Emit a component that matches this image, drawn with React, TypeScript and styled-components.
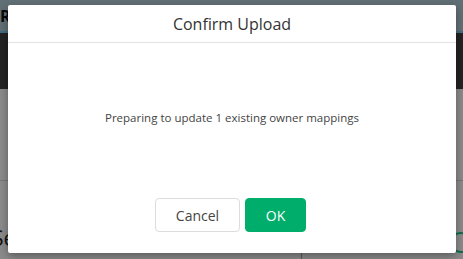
import React from "react"
import { styled, createGlobalStyle } from "styled-components"

const GlobalStyle = createGlobalStyle`
    html, body {
        margin: 0;
        padding: 0;
        width: 100%;
        height: 100%;
        overflow: hidden;
        font-family: "Open Sans", "Liberation Sans", sans-serif;
    }
    #root {
        height: 100%;
    }
`

const StyledPage = styled.div`
    position: relative;
    height: 100vh;
    display: flex;
    flex-direction: column;
    background-color: #ffffff;
`

const StyledTopBar = styled.header`
    height: 31px;
    flex-shrink: 0;
    display: flex;
    align-items: center;
    background-color: #b3cfd8;
    border-bottom: 2px solid #78c8ee;
    font-weight: 700;
    font-size: 16px;
    color: #111;
`

const StyledNav = styled.nav`
    height: 56px;
    flex-shrink: 0;
    background-color: #424242;
`

const StyledContent = styled.main`
    flex: 1;
    display: flex;
    flex-direction: column;
`

const StyledSection = styled.section`
    height: 91px;
    border-bottom: 1px solid #d8d8d8;
`

const StyledRow = styled.div`
    flex: 1;
    display: grid;
    grid-template-columns: 302px 1fr;
`

const StyledCell = styled.div<{ $divider?: boolean }>`
    display: flex;
    align-items: flex-end;
    padding-bottom: ${({ $divider }) => ($divider ? "8px" : "6px")};
    border-right: ${({ $divider }) => ($divider ? "1px solid #a0a0a0" : "none")};
    justify-content: ${({ $divider }) => ($divider ? "flex-start" : "flex-end")};
`

const StyledSectionTitle = styled.span`
    font-size: 21px;
    line-height: 1.2;
    color: #222;
    margin-left: -8px;
`

const StyledStatusRing = styled.span`
    width: 17px;
    height: 17px;
    border-radius: 50%;
    border: 2px solid #15c98d;
    margin-right: -8px;
`

const StyledBackdrop = styled.div`
    position: absolute;
    inset: 0;
    background-color: rgba(0, 0, 0, 0.46);
`

const StyledModal = styled.div`
    position: absolute;
    left: 8px;
    top: 5px;
    width: 448px;
    height: 248px;
    background-color: #ffffff;
    border-radius: 2px;
    box-shadow: 0 3px 8px rgba(0, 0, 0, 0.35);
    display: flex;
    flex-direction: column;
`

const StyledModalHeader = styled.div`
    height: 37px;
    flex-shrink: 0;
    display: flex;
    align-items: center;
    justify-content: center;
    border-bottom: 1px solid #e3e3e3;
`

const StyledModalTitle = styled.h3`
    margin: 0;
    font-size: 16px;
    font-weight: 400;
    color: #333;
`

const StyledModalBody = styled.div`
    flex: 1;
    display: flex;
    align-items: center;
    justify-content: center;
    padding-bottom: 7px;
`

const StyledMessage = styled.p`
    margin: 0;
    font-size: 11.5px;
    color: #444;
`

const StyledModalFooter = styled.div`
    display: flex;
    justify-content: center;
    gap: 5px;
    padding: 0 3px 21px 0;
`

const StyledButton = styled.button<{ $primary?: boolean }>`
    height: 34px;
    min-width: ${({ $primary }) => ($primary ? "61px" : "85px")};
    border-radius: 4px;
    font-family: "Open Sans", "Liberation Sans", sans-serif;
    font-size: 14px;
    cursor: pointer;
    border: 1px solid ${({ $primary }) => ($primary ? "#00ad6b" : "#dcdcdc")};
    background-color: ${({ $primary }) => ($primary ? "#00ad6b" : "#ffffff")};
    color: ${({ $primary }) => ($primary ? "#ffffff" : "#444")};
`

const App: React.FC = () => {
    return (
        <>
            <GlobalStyle />
            <StyledPage>
                <StyledTopBar>R</StyledTopBar>
                <StyledNav />
                <StyledContent>
                    <StyledSection />
                    <StyledRow>
                        <StyledCell $divider>
                            <StyledSectionTitle>Se</StyledSectionTitle>
                        </StyledCell>
                        <StyledCell>
                            <StyledStatusRing />
                        </StyledCell>
                    </StyledRow>
                </StyledContent>
                <StyledBackdrop />
                <StyledModal role="dialog" aria-label="Confirm Upload">
                    <StyledModalHeader>
                        <StyledModalTitle>Confirm Upload</StyledModalTitle>
                    </StyledModalHeader>
                    <StyledModalBody>
                        <StyledMessage>Preparing to update 1 existing owner mappings</StyledMessage>
                    </StyledModalBody>
                    <StyledModalFooter>
                        <StyledButton>Cancel</StyledButton>
                        <StyledButton $primary>OK</StyledButton>
                    </StyledModalFooter>
                </StyledModal>
            </StyledPage>
        </>
    )
}

export default App
